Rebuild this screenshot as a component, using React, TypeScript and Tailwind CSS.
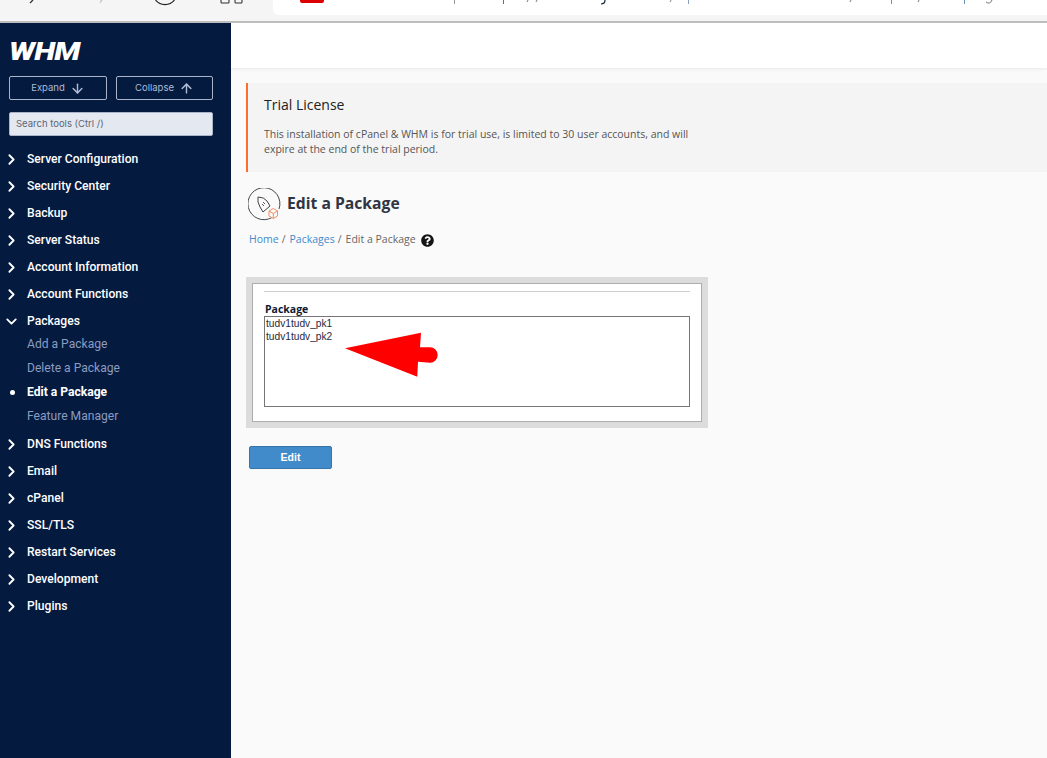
import { ArrowDown, ArrowUp, ChevronDown, ChevronRight } from "lucide-react";
import { FaQuestionCircle } from "react-icons/fa";

const before = [
  "Server Configuration",
  "Security Center",
  "Backup",
  "Server Status",
  "Account Information",
  "Account Functions",
];

const after = [
  "DNS Functions",
  "Email",
  "cPanel",
  "SSL/TLS",
  "Restart Services",
  "Development",
  "Plugins",
];

const packages = ["Add a Package", "Delete a Package", "Edit a Package", "Feature Manager"];

function NavRow({ label }: { label: string }) {
  return (
    <li className="flex h-[27px] items-center">
      <ChevronRight className="ml-[3px] -mt-[1px] size-[17px] text-white" strokeWidth={2.6} />
      <span className="ml-[7px] text-[12.1px] font-medium text-white">{label}</span>
    </li>
  );
}

function BrowserChrome() {
  return (
    <div className="relative h-[23px] shrink-0 border-b-2 border-[#bdbdbd] bg-[#f5f5f5]">
      <div className="absolute top-0 right-0 left-[273px] h-[15px] rounded-bl-[6px] bg-white" />
      <svg className="absolute top-0 left-0" width="1047" height="8" fill="none">
        <path d="M33 0 L30 3" stroke="#333" strokeWidth="1.3" />
        <path d="M100 0 L102 0 L100 3" stroke="#ccc" strokeWidth="1.3" />
        <path d="M155.5 0 A12 12 0 0 0 174.5 0" stroke="#222" strokeWidth="1.2" />
        <path d="M221 0 V2 Q221 3 222 3 H228 Q229 3 229 2 V0 M235 0 V2 Q235 3 236 3 H241 Q242 3 242 2 V0" stroke="#333" strokeWidth="1.1" />
        <path d="M300 0 H324 V1 Q324 3 322 3 H302 Q300 3 300 1 Z" fill="#dd0000" />
        <path d="M454.5 0 V4" stroke="#999" />
        <path d="M503.5 0 V4" stroke="#c2406a" />
        <path d="M528 0 L527 2 M537 0 L536 2" stroke="#777" />
        <path d="M605 0 Q605 4 601 4" stroke="#123" strokeWidth="1.2" />
        <path d="M671 0 L670 2" stroke="#888" />
        <path d="M688.5 0 V4" stroke="#8aa0c0" />
        <path d="M851 0 L850 2" stroke="#777" />
        <path d="M891.5 0 V4" stroke="#6f93bd" />
        <path d="M919 0 L918 2" stroke="#777" />
        <path d="M964.5 0 V4" stroke="#6f93bd" />
        <path d="M986 2 Q990 5 992 0" stroke="#777" />
      </svg>
    </div>
  );
}

function Sidebar() {
  return (
    <aside className="w-[231px] shrink-0 bg-[#051a3f] px-[9px] pt-[16px] pb-[140px] font-['Roboto',sans-serif]">
      <div className="flex h-[24px] items-center">
        <span className="origin-left scale-x-[1.18] text-[26px] leading-none font-black tracking-[-0.6px] text-white italic">
          WHM
        </span>
      </div>
      <div className="mt-[13px] flex gap-[9px] pr-[9px] font-['Inter',sans-serif]">
        <button className="flex h-[24px] w-[98px] items-center justify-center gap-[5px] rounded-[2px] border border-[#aab4c8] text-[9.5px] text-[#aebbd4]">
          Expand <ArrowDown className="size-[15px]" strokeWidth={2.3} />
        </button>
        <button className="flex h-[24px] w-[97px] items-center justify-center gap-[5px] rounded-[2px] border border-[#aab4c8] text-[9.5px] text-[#aebbd4]">
          Collapse <ArrowUp className="size-[15px]" strokeWidth={2.3} />
        </button>
      </div>
      <div className="mt-[12px] mr-[9px] flex h-[24px] items-center rounded-[2px] border border-[#aab4c8] bg-[#e4e8f1] px-[6px] font-['Inter',sans-serif] text-[9.5px] text-[#5c6473]">
        Search tools (Ctrl /)
      </div>
      <ul className="mt-[10px] -ml-[9px]">
        {before.map((label) => (
          <NavRow key={label} label={label} />
        ))}
        <li className="flex h-[27px] items-center">
          <ChevronDown className="ml-[3px] -mt-[1px] size-[17px] text-white" strokeWidth={2.6} />
          <span className="ml-[7px] text-[12.1px] font-medium text-white">Packages</span>
        </li>
        <li className="mt-[-2.5px] mb-[2.5px]">
          {packages.map((label) => {
            const active = label === "Edit a Package";
            return (
              <div key={label} className="relative flex h-[24px] items-center pl-[27px]">
                {active && <span className="absolute left-[10px] size-[5px] rounded-full bg-white" />}
                <span className={active ? "text-[12.1px] font-bold text-white" : "text-[12.1px] text-[#8b9cc0]"}>
                  {label}
                </span>
              </div>
            );
          })}
        </li>
        {after.map((label) => (
          <NavRow key={label} label={label} />
        ))}
      </ul>
    </aside>
  );
}

function PageIcon() {
  return (
    <svg width="34" height="34" viewBox="0 0 34 34" fill="none">
      <path d="M24 29.5 A16 16 0 1 1 31 21" stroke="#333" strokeWidth="0.9" />
      <path d="M10 9 Q16 9 19 13 L22 18 L15 24 L12 19 Q9 14 10 9 Z" stroke="#444" strokeWidth="1" />
      <path d="M15 14 L17 16 M14 16 L16 18" stroke="#444" strokeWidth="0.9" />
      <path d="M25.3 20.5 L29.5 23 V28 L25.3 30.5 L21 28 V23 Z M21 23 L25.3 25.5 L29.5 23 M25.3 25.5 V30.5" stroke="#f58d63" strokeWidth="1" />
    </svg>
  );
}

function Arrow() {
  return (
    <svg className="absolute top-[14px] left-[79px]" width="95" height="47" viewBox="0 0 95 47">
      <path
        d="M1 17.3 L77 1.7 L76 16.3 L86 16.3 A7.7 7.7 0 0 1 86 31.7 L74 30.7 L73.3 45.7 Z"
        fill="#ff0000"
      />
    </svg>
  );
}

export default function App() {
  return (
    <div className="flex min-h-[758px] flex-col overflow-hidden bg-[#fafafa]">
      <BrowserChrome />
      <div className="flex flex-1">
        <Sidebar />
        <main className="min-w-0 flex-1">
          <div className="h-[45px] bg-white shadow-[0_1px_3px_rgba(0,0,0,0.08)]" />
          <div className="pt-[15px] pl-[15px] font-['Open_Sans',sans-serif]">
            <section className="h-[89px] border-l-2 border-[#ff6c2c] bg-[#f4f4f4] pt-[12px] pl-[16px]">
              <h2 className="text-[14px] leading-[20px] text-[#222]">Trial License</h2>
              <p className="mt-[12px] w-[440px] text-[10.5px] leading-[15px] text-[#555]">
                This installation of cPanel &amp; WHM is for trial use, is limited to 30 user accounts, and will expire at
                the end of the trial period.
              </p>
            </section>
            <div className="mt-[16px] ml-[2px] flex items-center gap-[5px]">
              <PageIcon />
              <h1 className="mb-[4px] text-[15.7px] leading-[24px] font-bold text-[#2f3541]">Edit a Package</h1>
            </div>
            <nav className="mt-[8px] ml-[3px] flex h-[20px] items-center text-[10.5px] text-[#666]">
              <a className="text-[#428bca]">Home</a>
              <span className="ml-[3px]">/</span>
              <a className="ml-[4px] text-[#428bca]">Packages</a>
              <span className="ml-[3px]">/</span>
              <span className="ml-[4px]">Edit a Package</span>
              <FaQuestionCircle className="ml-[5px] size-[13px] text-[#151515]" />
            </nav>
            <form className="mt-[27px] w-[462px] bg-[#dcdcdc] p-[6px] font-['Liberation_Sans',sans-serif]">
              <div className="h-[139px] border border-[#adadad] bg-white px-[11px] pt-[7px]">
                <hr className="border-[#cfcfcf]" />
                <label className="mt-[11px] block pl-[1px] font-['Open_Sans',sans-serif] text-[10.5px] leading-[13px] font-bold text-[#0d1a33]">
                  Package
                </label>
                <div className="relative h-[91px] border border-[#767676] px-[1px] text-[10.2px] leading-[13px] text-[#1f2a3d]">
                  <div>tudv1tudv_pk1</div>
                  <div>tudv1tudv_pk2</div>
                  <Arrow />
                </div>
              </div>
            </form>
            <button className="mt-[18px] ml-[3px] h-[23px] w-[83px] rounded-[2px] border border-[#3674aa] bg-[#428bca] font-['Liberation_Sans',sans-serif] text-[10.5px] font-bold text-white">
              Edit
            </button>
          </div>
        </main>
      </div>
    </div>
  );
}
